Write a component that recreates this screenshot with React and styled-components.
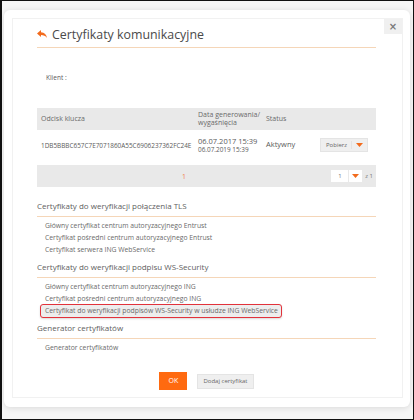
import styled, { createGlobalStyle } from "styled-components";

const GlobalStyle = createGlobalStyle`
  html, body {
    margin: 0;
    padding: 0;
    background: #ffffff;
    font-family: "Open Sans", "Liberation Sans", sans-serif;
  }
  * { box-sizing: border-box; }
`;

const sections = [
  {
    title: "Certyfikaty do weryfikacji połączenia TLS",
    items: [
      "Główny certyfikat centrum autoryzacyjnego Entrust",
      "Certyfikat pośredni centrum autoryzacyjnego Entrust",
      "Certyfikat serwera ING WebService",
    ],
  },
  {
    title: "Certyfikaty do weryfikacji podpisu WS-Security",
    items: [
      "Główny certyfikat centrum autoryzacyjnego ING",
      "Certyfikat pośredni centrum autoryzacyjnego ING",
      "Certyfikat do weryfikacji podpisów WS-Security w usłudze ING WebService",
    ],
    marked: 2,
  },
  {
    title: "Generator certyfikatów",
    items: ["Generator certyfikatów"],
  },
];

export default function App() {
  return (
    <>
      <GlobalStyle />
      <Frame>
        <Card>
          <Panel>
            <CloseButton>×</CloseButton>
            <Header>
              <BackIcon />
              <Title>Certyfikaty komunikacyjne</Title>
            </Header>
            <Client>Klient :</Client>

            <Table>
              <HeadCell>Odcisk klucza</HeadCell>
              <HeadCell>
                Data generowania/
                <br />
                wygaśnięcia
              </HeadCell>
              <HeadCell>Status</HeadCell>
              <HeadCell />
              <Cell>1DB5BBBC657C7E7071860A55C6906237362FC24E</Cell>
              <Cell>
                <DateMain>06.07.2017 15:39</DateMain>
                <DateSub>06.07.2019 15:39</DateSub>
              </Cell>
              <Cell>
                <Status>Aktywny</Status>
              </Cell>
              <Cell>
                <SplitButton>
                  <span>Pobierz</span>
                  <Caret />
                </SplitButton>
              </Cell>
            </Table>

            <Pager>
              <PageNumber>1</PageNumber>
              <PageSelect>
                <SelectValue>1</SelectValue>
                <SelectArrow>
                  <Caret />
                </SelectArrow>
              </PageSelect>
              <PageTotal>z 1</PageTotal>
            </Pager>

            <Sections>
              {sections.map((s, i) => (
                <Section key={i}>
                  <SectionTitle>{s.title}</SectionTitle>
                  <ItemList>
                    {s.items.map((it, j) => (
                      <Item key={j} $marked={s.marked === j}>
                        {it}
                      </Item>
                    ))}
                  </ItemList>
                </Section>
              ))}
            </Sections>

            <Actions>
              <PrimaryButton>OK</PrimaryButton>
              <SecondaryButton>Dodaj certyfikat</SecondaryButton>
            </Actions>
          </Panel>
        </Card>
      </Frame>
    </>
  );
}

function BackIcon() {
  return (
    <svg width="10" height="8" viewBox="0 0 10 8">
      <path
        d="M4 0 L0 3.5 L4 7 V5 C6.5 5 8.5 5.8 10 8 C9.5 4.8 7.5 2.4 4 2.2 Z"
        fill="#f26b1d"
      />
    </svg>
  );
}

function Caret() {
  return (
    <svg width="7" height="4" viewBox="0 0 7 4">
      <path d="M0 0 H7 L3.5 4 Z" fill="#f26b1d" />
    </svg>
  );
}

const Frame = styled.div`
  width: 414px;
  height: 420px;
  border: 1px solid #111;
  border-left-width: 2px;
  background: #f6f6f6;
  padding: 9px 3px 0 2px;
`;

const Card = styled.div`
  height: 397px;
  background: #fff;
  border-radius: 6px;
  box-shadow: 0 1px 6px rgba(0, 0, 0, 0.12);
  padding: 8px 7px 9px 8px;
`;

const Panel = styled.div`
  position: relative;
  height: 100%;
  border: 1px solid #f1f1f1;
  padding: 0 26px 0 24px;
  color: #555;
`;

const CloseButton = styled.div`
  position: absolute;
  top: 0;
  right: 0;
  width: 18px;
  height: 15px;
  background: #f0f0f0;
  color: #7a7a7a;
  font-family: "DejaVu Sans", sans-serif;
  font-size: 10px;
  font-weight: bold;
  line-height: 15px;
  text-align: center;
`;

const Header = styled.div`
  display: flex;
  align-items: center;
  gap: 5px;
  height: 29px;
  padding-top: 2px;
  border-bottom: 1px solid #f5d6b8;
`;

const Title = styled.h1`
  margin: 0;
  font-size: 12.4px;
  font-weight: 400;
  color: #4a4a4a;
`;

const Client = styled.div`
  margin: 25px 0 0 9px;
  font-size: 6.5px;
  line-height: 9px;
  color: #5a5a5a;
`;

const Table = styled.div`
  display: grid;
  grid-template-columns: 158px 71px 50px 60px;
  margin-top: 26px;
`;

const HeadCell = styled.div`
  background: #e9e9e9;
  height: 22px;
  display: flex;
  flex-direction: column;
  justify-content: center;
  padding-left: 4px;
  font-size: 7px;
  line-height: 8.5px;
  color: #6a6a6a;
  &:nth-child(2) { padding-left: 3px; }
  &:nth-child(3) { padding-left: 0; }
`;

const Cell = styled.div`
  height: 30px;
  display: flex;
  flex-direction: column;
  justify-content: center;
  padding-left: 4px;
  font-size: 6.4px;
  color: #5a5a5a;
  &:nth-child(6) { padding-left: 3px; }
  &:nth-child(7) { padding-left: 0; }
`;

const DateMain = styled.div`
  font-size: 7.5px;
  line-height: 10px;
  color: #5a5a5a;
`;

const DateSub = styled.div`
  font-size: 6.4px;
  line-height: 8px;
  color: #5a5a5a;
`;

const Status = styled.div`
  font-size: 7.5px;
  color: #5a5a5a;
  margin-top: -2px;
`;

const SplitButton = styled.div`
  display: flex;
  align-items: center;
  width: 48px;
  height: 14px;
  background: #efefef;
  border: 1px solid #e4e4e4;
  font-size: 6px;
  color: #666;
  & > span {
    flex: 1;
    padding-left: 5px;
    border-right: 1px solid #e2e2e2;
  }
  & > svg {
    margin: 0 4px;
  }
`;

const Pager = styled.div`
  display: flex;
  align-items: center;
  height: 22px;
  margin-top: 5px;
  background: #e9e9e9;
  padding-right: 3px;
`;

const PageNumber = styled.div`
  margin-left: 145px;
  flex: 1;
  font-size: 7px;
  color: #f08050;
`;

const PageSelect = styled.div`
  display: flex;
  height: 12px;
  gap: 1px;
`;

const SelectValue = styled.div`
  width: 17px;
  background: #fff;
  font-size: 6px;
  line-height: 12px;
  padding-left: 7px;
  color: #777;
`;

const SelectArrow = styled.div`
  width: 13px;
  background: #fff;
  display: flex;
  align-items: center;
  justify-content: center;
`;

const PageTotal = styled.div`
  margin-left: 3px;
  font-size: 6px;
  color: #777;
`;

const Sections = styled.div`
  display: flex;
  flex-direction: column;
  gap: 5px;
  margin-top: 13px;
`;

const Section = styled.div``;

const SectionTitle = styled.div`
  font-size: 8px;
  line-height: 12px;
  padding-bottom: 4px;
  border-bottom: 1px solid #f5d6b8;
  color: #606060;
`;

const ItemList = styled.div`
  padding-top: 3px;
`;

const Item = styled.div`
  width: fit-content;
  margin-left: 3px;
  padding: 0 4px 0 5px;
  font-size: 6.8px;
  line-height: 12px;
  color: #6a6a6a;
  ${(p) =>
    p.$marked &&
    `
    margin-top: -1px;
    margin-bottom: -1px;
    border: 1px solid #e2323b;
    border-radius: 3px;
    background: #ededed;
    padding: 0 3px 0 4px;
    box-shadow: 0 1px 2px rgba(0,0,0,0.15);
  `}
`;

const Actions = styled.div`
  display: flex;
  justify-content: center;
  align-items: center;
  gap: 10px;
  margin-top: 18px;
`;

const PrimaryButton = styled.div`
  width: 28px;
  height: 18px;
  background: #ff6a10;
  color: #fff;
  font-size: 7px;
  line-height: 18px;
  text-align: center;
`;

const SecondaryButton = styled.div`
  height: 15px;
  padding: 0 5px;
  background: #efefef;
  border: 1px solid #e4e4e4;
  color: #666;
  font-size: 6px;
  line-height: 13px;
`;
